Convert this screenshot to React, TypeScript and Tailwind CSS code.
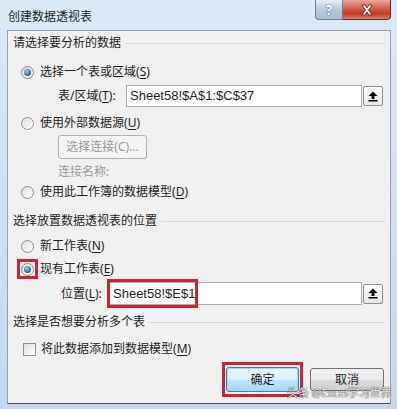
import React from "react"

/* Create PivotTable dialog (Excel, Win7 theme) */

const FONT = "font-['Noto_Sans','Noto_Sans_CJK_SC',sans-serif]"
const INPUT_FONT = "font-['Liberation_Sans','Noto_Sans_CJK_SC',sans-serif]"

function Radio({ checked }: { checked?: boolean }) {
  return (
    <span className="w-[13px] h-[13px] rounded-full border border-[#8c8f91] bg-[linear-gradient(135deg,#dcdcdc,#ffffff)] flex items-center justify-center shrink-0">
      {checked && (
        <span className="w-[7px] h-[7px] rounded-full bg-[radial-gradient(circle_at_40%_35%,#9ad6f7,#2a6cb8_60%,#163f78)]" />
      )}
    </span>
  )
}

function Key({ k }: { k: string }) {
  return (
    <>
      (<span className="underline underline-offset-2">{k}</span>)
    </>
  )
}

function GroupHeader({ title, mt }: { title: string; mt: string }) {
  return (
    <div className={`flex items-center h-[16px] gap-[4px] ${mt}`}>
      <span className="text-[12px] leading-[16px] text-[#1e1e1e]">{title}</span>
      <div className="flex-1 h-px bg-[#d5dde3]" />
    </div>
  )
}

function RadioRow({
  label,
  k,
  checked,
  mt,
  marked
}: {
  label: string
  k: string
  checked?: boolean
  mt: string
  marked?: boolean
}) {
  return (
    <div className={`flex items-center h-[16px] ${mt}`}>
      <span className="relative ml-[8px] flex">
        <Radio checked={checked} />
        {marked && (
          <span className="absolute left-[-4px] top-[-4px] w-[21px] h-[20px] border-[3px] border-[#d0232f]" />
        )}
      </span>
      <span className="ml-[6px] text-[12px] leading-[16px] text-[#1e1e1e]">
        {label}
        <Key k={k} />
      </span>
    </div>
  )
}

function UpButton() {
  return (
    <div className="w-[20px] h-[20px] border border-[#8d8d8d] rounded-[2px] bg-[linear-gradient(#ffffff,#e6e6e6)] flex items-center justify-center">
      <svg width="10" height="11" viewBox="0 0 10 11">
        <path d="M5 0.5 L9.5 5 L6.5 5 L6.5 8 L3.5 8 L3.5 5 L0.5 5 Z" fill="#000" />
        <rect x="0.5" y="9" width="9" height="1.5" fill="#000" />
      </svg>
    </div>
  )
}

export default function App() {
  return (
    <div
      className={`relative w-[397px] h-[409px] overflow-hidden bg-[linear-gradient(#dce9f7,#c3d8ef)] ${FONT}`}
    >
      {/* TITLE BAR */}

      <div className="h-[30px] flex justify-between">
        <div className="pl-[8px] pt-[9px] text-[12px] leading-[16px] text-[#1e1e1e]">
          创建数据透视表
        </div>

        <div className="flex items-start mr-[6px]">
          <div className="w-[28px] h-[20px] border border-[#6f7f93] border-t-0 rounded-bl-[4px] bg-[linear-gradient(#e6eef7,#b9c9da_50%,#a9bccf)] flex items-center justify-center text-[14px] font-bold text-white [text-shadow:0_0_1px_#40505f,0_0_1px_#40505f]">
            ?
          </div>
          <div className="w-[48px] h-[20px] border border-[#6b2a22] border-t-0 border-l-0 rounded-br-[4px] bg-[linear-gradient(#e9a89b,#cf5844_50%,#c23a25_70%,#d9806c)] flex items-center justify-center">
            <svg width="14" height="12" viewBox="0 0 14 12">
              <path
                d="M2 1 L5 1 L7 4 L9 1 L12 1 L8.5 6 L12 11 L9 11 L7 8 L5 11 L2 11 L5.5 6 Z"
                fill="#fff"
                stroke="#5b1d14"
                strokeWidth="0.8"
              />
            </svg>
          </div>
        </div>
      </div>

      {/* CONTENT */}

      <div className="ml-[7px] w-[384px] h-[374px] bg-[#f0f0f0] border border-[#8da2b8] border-b-[#3f4d5c] flex flex-col px-[5px] text-[#1e1e1e]">

        <GroupHeader title="请选择要分析的数据" mt="mt-[4px]" />

        <RadioRow label="选择一个表或区域" k="S" checked mt="mt-[13px]" />

        {/* table / range */}

        <div className="flex items-center h-[22px] mt-[5px]">
          <span className="ml-[45px] w-[68px] text-[12px] leading-[16px]">
            表/区域<Key k="T" />:
          </span>
          <div className={`w-[236px] h-[22px] bg-white border border-[#a9acb2] flex items-center pl-[3px] text-[13px] ${INPUT_FONT}`}>
            Sheet58!$A$1:$C$37
          </div>
          <div className="ml-[1px]">
            <UpButton />
          </div>
        </div>

        <RadioRow label="使用外部数据源" k="U" mt="mt-[8px]" />

        <div className="mt-[4px] ml-[45px] w-[89px] h-[24px] border border-[#adb2b5] rounded-[3px] bg-[#f4f4f4] flex items-center justify-center text-[12px] text-[#9a9a9a]">
          选择连接(C)...
        </div>

        <div className="mt-[5px] ml-[45px] h-[16px] text-[12px] leading-[16px] text-[#9a9a9a]">
          连接名称:
        </div>

        <RadioRow label="使用此工作簿的数据模型" k="D" mt="mt-[4px]" />

        <GroupHeader title="选择放置数据透视表的位置" mt="mt-[13px]" />

        <RadioRow label="新工作表" k="N" mt="mt-[9px]" />

        <RadioRow label="现有工作表" k="E" checked marked mt="mt-[7px]" />

        {/* location */}

        <div className="flex items-center h-[23px] mt-[5px]">
          <span className="ml-[48px] w-[47px] text-[12px] leading-[16px]">
            位置<Key k="L" />:
          </span>
          <div className={`relative w-[254px] h-[23px] bg-white border border-[#a9acb2] flex items-center pl-[4px] text-[13px] ${INPUT_FONT}`}>
            Sheet58!$E$1
            <span className="ml-[1px] w-px h-[15px] bg-black" />
            <span className="absolute left-[-2px] top-[-4px] w-[91px] h-[29px] border-[3px] border-[#d0232f]" />
          </div>
          <div className="ml-[1px]">
            <UpButton />
          </div>
        </div>

        <GroupHeader title="选择是否想要分析多个表" mt="mt-[9px]" />

        {/* checkbox */}

        <div className="flex items-center h-[16px] mt-[11px]">
          <span className="ml-[10px] w-[13px] h-[13px] border border-[#8e8f8f] bg-[linear-gradient(135deg,#dedede,#ffffff)]" />
          <span className="ml-[5px] text-[12px] leading-[16px]">
            将此数据添加到数据模型<Key k="M" />
          </span>
        </div>

        {/* buttons */}

        <div className="flex items-center justify-end mt-[10px] h-[25px] pr-[1px] gap-[11px]">
          <div className="relative w-[73px] h-[25px] border border-[#3c7fb1] rounded-[3px] bg-[linear-gradient(#eaf6fd,#d9f0fc_50%,#bee6fd_51%,#a7d9f5)] shadow-[inset_0_0_0_1px_#9fdcf7] flex items-center justify-center text-[12px]">
            确定
            <span className="absolute left-[-5px] top-[-6px] w-[81px] h-[35px] border-[3px] border-[#d0232f]" />
          </div>
          <div className="w-[74px] h-[23px] border border-[#707070] rounded-[3px] bg-[linear-gradient(#f2f2f2,#ebebeb_50%,#dddddd_51%,#cfcfcf)] flex items-center justify-center text-[12px]">
            取消
          </div>
        </div>

      </div>

      {/* watermark */}

      <div className="absolute left-[287px] top-[386px] whitespace-nowrap text-[11px] leading-[14px] text-white/90 [text-shadow:0_0_1px_#333,0_0_1px_#333]">
        头条 @Excel学习世界
      </div>
    </div>
  )
}
